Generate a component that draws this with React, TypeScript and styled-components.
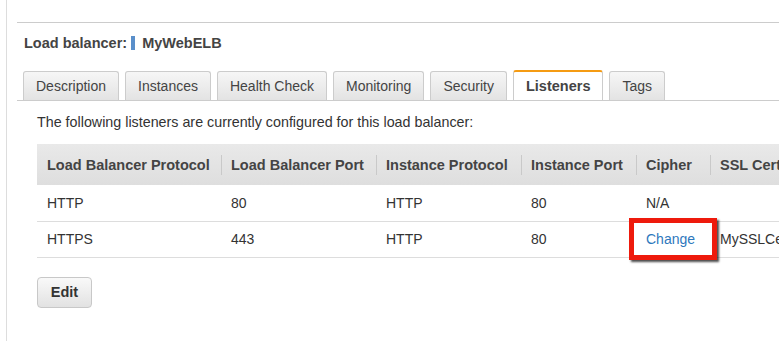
import styled, { createGlobalStyle } from "styled-components";

const GlobalStyle = createGlobalStyle`
  html, body {
    margin: 0;
    padding: 0;
    background: #ffffff;
    overflow: hidden;
  }
  body {
    font-family: "Liberation Sans", Arial, sans-serif;
    font-size: 14px;
    color: #444444;
  }
`;

const tabs = [
  "Description",
  "Instances",
  "Health Check",
  "Monitoring",
  "Security",
  "Listeners",
  "Tags",
];

const columns = [
  { title: "Load Balancer Protocol", width: 184 },
  { title: "Load Balancer Port", width: 155 },
  { title: "Instance Protocol", width: 145 },
  { title: "Instance Port", width: 115 },
  { title: "Cipher", width: 74 },
  { title: "SSL Certificate", width: 160 },
];

const App = () => {
  return (
    <>
      <GlobalStyle />
      <Frame>
        <Panel>
          <Title>
            Load balancer:
            <NameMark />
            MyWebELB
          </Title>
          <TabBar>
            {tabs.map((tab) => (
              <Tab key={tab} $active={tab === "Listeners"}>
                {tab}
              </Tab>
            ))}
          </TabBar>
          <Content>
            <Intro>
              The following listeners are currently configured for this load
              balancer:
            </Intro>
            <ListenerTable>
              <colgroup>
                {columns.map((c) => (
                  <col key={c.title} style={{ width: c.width }} />
                ))}
              </colgroup>
              <thead>
                <HeadRow>
                  {columns.map((c, i) => (
                    <HeadCell key={c.title} $first={i === 0}>
                      {c.title}
                    </HeadCell>
                  ))}
                </HeadRow>
              </thead>
              <tbody>
                <Row>
                  <Cell>HTTP</Cell>
                  <Cell>80</Cell>
                  <Cell>HTTP</Cell>
                  <Cell>80</Cell>
                  <Cell>N/A</Cell>
                  <Cell></Cell>
                </Row>
                <Row>
                  <Cell>HTTPS</Cell>
                  <Cell>443</Cell>
                  <Cell>HTTP</Cell>
                  <Cell>80</Cell>
                  <HighlightCell>
                    <ChangeLink href="#">Change</ChangeLink>
                    <Callout />
                  </HighlightCell>
                  <Cell>MySSLCertificate</Cell>
                </Row>
              </tbody>
            </ListenerTable>
            <EditButton>Edit</EditButton>
          </Content>
        </Panel>
      </Frame>
    </>
  );
};

const Frame = styled.div`
  margin-left: 6px;
  min-height: 341px;
  padding: 22px 0 0 10px;
  border-left: 1px solid #dddddd;
  box-sizing: border-box;
`;

const Panel = styled.div`
  border-top: 1px solid #cccccc;
`;

const Title = styled.h1`
  display: flex;
  align-items: center;
  margin: 0;
  padding: 12px 0 0 7px;
  height: 16px;
  line-height: 16px;
  font-size: 14.5px;
  font-weight: 700;
  color: #444444;
  box-sizing: content-box;
`;

const NameMark = styled.span`
  display: inline-block;
  width: 4px;
  height: 14px;
  margin: 0 7px 0 4px;
  background: #5a8fca;
`;

const TabBar = styled.div`
  display: flex;
  align-items: flex-end;
  gap: 6px;
  margin-top: 19px;
  padding-left: 6px;
  border-bottom: 1px solid #cccccc;
`;

const Tab = styled.div<{ $active?: boolean }>`
  height: 28px;
  line-height: 28px;
  padding: 0 12px;
  border: 1px solid #cccccc;
  border-bottom: none;
  border-radius: 3px 3px 0 0;
  font-size: ${(p) => (p.$active ? "14.5px" : "14px")};
  color: #444444;
  font-weight: ${(p) => (p.$active ? 700 : 400)};
  background: ${(p) =>
    p.$active ? "#ffffff" : "linear-gradient(#f6f6f6, #e3e3e3)"};
  border-top: ${(p) => (p.$active ? "2px solid #f59b13" : "1px solid #cccccc")};
  cursor: pointer;
`;

const Content = styled.div`
  padding: 13px 0 0 20px;
`;

const Intro = styled.p`
  margin: 0;
  line-height: 16px;
  font-size: 14.3px;
  color: #333333;
`;

const ListenerTable = styled.table`
  margin-top: 14px;
  border-collapse: collapse;
  table-layout: fixed;
  width: 833px;
`;

const HeadRow = styled.tr`
  height: 41px;
  background: linear-gradient(#e9e9e9, #dedede);
`;

const HeadCell = styled.th<{ $first?: boolean }>`
  padding: 0 10px;
  text-align: left;
  font-size: 14.5px;
  font-weight: 700;
  color: #444444;
  white-space: nowrap;
  overflow: hidden;
  background: ${(p) =>
    p.$first
      ? "none"
      : "linear-gradient(#c9c9c9, #c9c9c9) left center / 1px 20px no-repeat"};
`;

const Row = styled.tr`
  height: 36px;
  border-bottom: 1px solid #dddddd;
`;

const Cell = styled.td`
  padding: 0 10px;
  font-size: 14px;
  color: #333333;
  white-space: nowrap;
  overflow: hidden;
`;

const HighlightCell = styled(Cell)`
  position: relative;
  overflow: visible;
`;

const ChangeLink = styled.a`
  color: #2e78bd;
  text-decoration: none;
`;

const Callout = styled.span`
  position: absolute;
  left: -7px;
  right: -7px;
  top: -4px;
  bottom: -3px;
  border: 5px solid #ee1a0c;
  box-shadow: 2px 2px 2px rgba(0, 0, 0, 0.7);
  pointer-events: none;
`;

const EditButton = styled.button`
  display: block;
  margin-top: 19px;
  width: 55px;
  height: 31px;
  padding: 0;
  border: 1px solid #c8c8c8;
  border-radius: 4px;
  background: linear-gradient(#f9f9f9, #e2e2e2);
  font-family: "Liberation Sans", Arial, sans-serif;
  font-size: 14.5px;
  font-weight: 700;
  color: #333333;
  cursor: pointer;
`;

export default App;
